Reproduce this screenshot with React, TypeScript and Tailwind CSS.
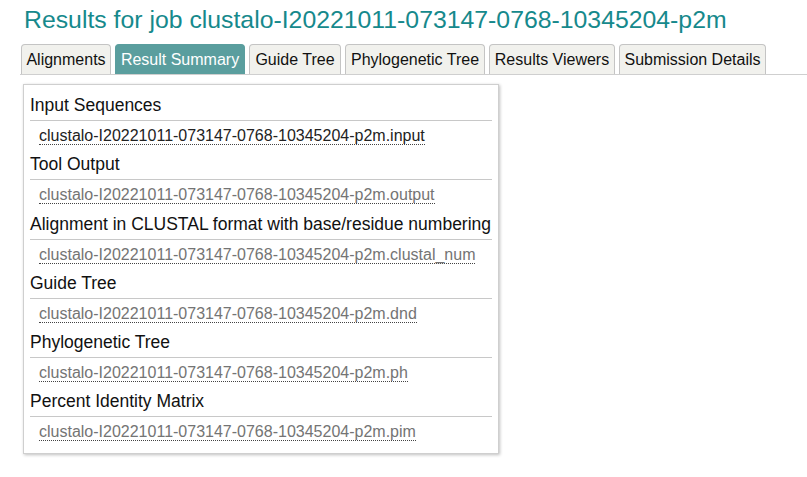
const sections = [
  { title: 'Input Sequences', file: 'clustalo-I20221011-073147-0768-10345204-p2m.input', visited: false },
  { title: 'Tool Output', file: 'clustalo-I20221011-073147-0768-10345204-p2m.output', visited: true },
  { title: 'Alignment in CLUSTAL format with base/residue numbering', file: 'clustalo-I20221011-073147-0768-10345204-p2m.clustal_num', visited: true },
  { title: 'Guide Tree', file: 'clustalo-I20221011-073147-0768-10345204-p2m.dnd', visited: true },
  { title: 'Phylogenetic Tree', file: 'clustalo-I20221011-073147-0768-10345204-p2m.ph', visited: true },
  { title: 'Percent Identity Matrix', file: 'clustalo-I20221011-073147-0768-10345204-p2m.pim', visited: true },
]

const tabs = [
  { label: 'Alignments', width: 'w-[90px]' },
  { label: 'Result Summary', width: 'w-[130px]' },
  { label: 'Guide Tree', width: 'w-[92px]' },
  { label: 'Phylogenetic Tree', width: 'w-[140px]' },
  { label: 'Results Viewers', width: 'w-[126px]' },
  { label: 'Submission Details', width: 'w-[147px]' },
]

export default function App() {
  return (
    <div className="w-[807px] h-[477px] bg-white overflow-hidden font-['Liberation_Sans',Arial,sans-serif]">
      <h1 className="pl-[24px] pt-[4px] text-[24.8px] leading-[31px] text-[#16898c]">
        Results for job clustalo-I20221011-073147-0768-10345204-p2m
      </h1>

      {/* Tabs */}
      <div className="ml-[20px] mt-[9px] flex gap-[4px] pl-[1px] border-b border-[#cfcfcf]">
        {tabs.map((tab) => {
          const isActive = tab.label === 'Result Summary'
          return (
            <div
              key={tab.label}
              className={`${tab.width} h-[30px] flex items-center justify-center whitespace-nowrap rounded-t-[4px] border border-b-0 text-[16px] ${
                isActive
                  ? 'bg-[#5a9e9e] border-[#5a9e9e] text-white'
                  : 'bg-[#f1f1ed] border-[#c4c4c4] text-[#111]'
              }`}
            >
              {tab.label}
            </div>
          )
        })}
      </div>

      {/* Result summary panel */}
      <div className="ml-[23px] mt-[9px] w-[476px] border border-[#cfcfcf] shadow-[1px_1px_3px_rgba(0,0,0,0.25)] px-[6px] pt-[7px] pb-[5px]">
        {sections.map((s) => (
          <div key={s.title}>
            <div className="text-[17.5px] leading-[24px] pt-[1px] pb-[3px] border-b border-[#c8c8c8] text-[#111] whitespace-nowrap">{s.title}</div>
            <div className="h-[30.25px] pl-[9px] pt-[3px]">
              <span
                className={`text-[16px] leading-[21px] border-b border-dotted border-[#444] whitespace-nowrap ${
                  s.visited ? 'text-[#747474]' : 'text-[#222]'
                }`}
              >
                {s.file}
              </span>
            </div>
          </div>
        ))}
      </div>
    </div>
  )
}
